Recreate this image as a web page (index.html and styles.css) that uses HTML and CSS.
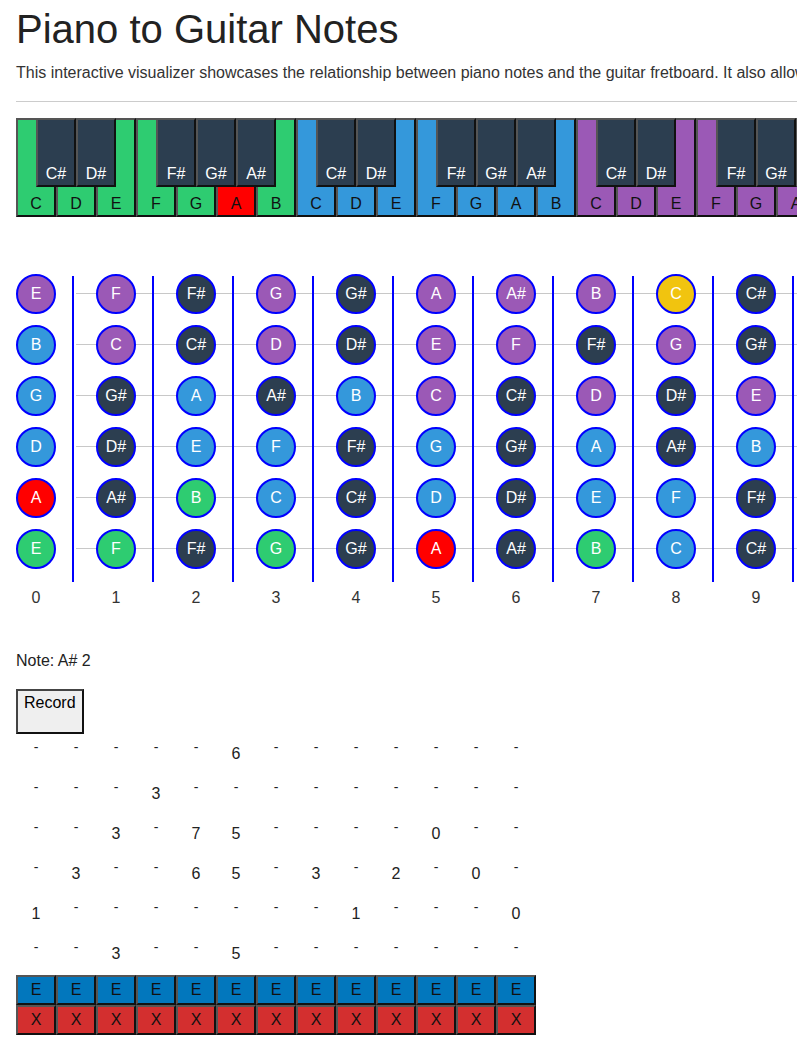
FILE: index.html
```html
<!DOCTYPE html>
<html lang="en">
<head>
<meta charset="utf-8">
<title>Piano to Guitar Notes</title>
<link rel="stylesheet" href="styles.css">
</head>
<body>
<div class="page">
  <h1 class="title">Piano to Guitar Notes</h1>
  <p class="intro">This interactive visualizer showcases the relationship between piano notes and the guitar fretboard. It also allows you to record the notes you play and see them written out as guitar tablature.</p>
  <hr class="rule">

  <div class="piano">
    <div class="octave oct-green">
      <div class="white k-c">C</div><div class="white k-d">D</div><div class="white k-e">E</div>
      <div class="white k-f">F</div><div class="white k-g">G</div><div class="white k-a active">A</div><div class="white k-b">B</div>
      <div class="black k-cs">C#</div><div class="black k-ds">D#</div>
      <div class="black k-fs">F#</div><div class="black k-gs">G#</div><div class="black k-as">A#</div>
    </div>
    <div class="octave oct-blue">
      <div class="white k-c">C</div><div class="white k-d">D</div><div class="white k-e">E</div>
      <div class="white k-f">F</div><div class="white k-g">G</div><div class="white k-a">A</div><div class="white k-b">B</div>
      <div class="black k-cs">C#</div><div class="black k-ds">D#</div>
      <div class="black k-fs">F#</div><div class="black k-gs">G#</div><div class="black k-as">A#</div>
    </div>
    <div class="octave oct-purple">
      <div class="white k-c">C</div><div class="white k-d">D</div><div class="white k-e">E</div>
      <div class="white k-f">F</div><div class="white k-g">G</div><div class="white k-a">A</div><div class="white k-b">B</div>
      <div class="black k-cs">C#</div><div class="black k-ds">D#</div>
      <div class="black k-fs">F#</div><div class="black k-gs">G#</div><div class="black k-as">A#</div>
    </div>
  </div>

  <div class="fretboard">
    <div class="dot purple">E</div><div class="dot purple">F</div><div class="dot dark">F#</div><div class="dot purple">G</div><div class="dot dark">G#</div><div class="dot purple">A</div><div class="dot purple">A#</div><div class="dot purple">B</div><div class="dot yellow">C</div><div class="dot dark">C#</div>

    <div class="dot blue">B</div><div class="dot purple">C</div><div class="dot dark">C#</div><div class="dot purple">D</div><div class="dot dark">D#</div><div class="dot purple">E</div><div class="dot purple">F</div><div class="dot dark">F#</div><div class="dot purple">G</div><div class="dot dark">G#</div>

    <div class="dot blue">G</div><div class="dot dark">G#</div><div class="dot blue">A</div><div class="dot dark">A#</div><div class="dot blue">B</div><div class="dot purple">C</div><div class="dot dark">C#</div><div class="dot purple">D</div><div class="dot dark">D#</div><div class="dot purple">E</div>

    <div class="dot blue">D</div><div class="dot dark">D#</div><div class="dot blue">E</div><div class="dot blue">F</div><div class="dot dark">F#</div><div class="dot blue">G</div><div class="dot dark">G#</div><div class="dot blue">A</div><div class="dot dark">A#</div><div class="dot blue">B</div>

    <div class="dot red">A</div><div class="dot dark">A#</div><div class="dot green">B</div><div class="dot blue">C</div><div class="dot dark">C#</div><div class="dot blue">D</div><div class="dot dark">D#</div><div class="dot blue">E</div><div class="dot blue">F</div><div class="dot dark">F#</div>

    <div class="dot green">E</div><div class="dot green">F</div><div class="dot dark">F#</div><div class="dot green">G</div><div class="dot dark">G#</div><div class="dot red">A</div><div class="dot dark">A#</div><div class="dot green">B</div><div class="dot blue">C</div><div class="dot dark">C#</div>

    <div class="fret-num">0</div><div class="fret-num">1</div><div class="fret-num">2</div><div class="fret-num">3</div><div class="fret-num">4</div><div class="fret-num">5</div><div class="fret-num">6</div><div class="fret-num">7</div><div class="fret-num">8</div><div class="fret-num">9</div>
  </div>

  <p class="note">Note: A# 2</p>
  <button class="record" type="button">Record</button>

  <div class="tab">
    <div class="cell dash">-</div><div class="cell dash">-</div><div class="cell dash">-</div><div class="cell dash">-</div><div class="cell dash">-</div><div class="cell">6</div><div class="cell dash">-</div><div class="cell dash">-</div><div class="cell dash">-</div><div class="cell dash">-</div><div class="cell dash">-</div><div class="cell dash">-</div><div class="cell dash">-</div>

    <div class="cell dash">-</div><div class="cell dash">-</div><div class="cell dash">-</div><div class="cell">3</div><div class="cell dash">-</div><div class="cell dash">-</div><div class="cell dash">-</div><div class="cell dash">-</div><div class="cell dash">-</div><div class="cell dash">-</div><div class="cell dash">-</div><div class="cell dash">-</div><div class="cell dash">-</div>

    <div class="cell dash">-</div><div class="cell dash">-</div><div class="cell">3</div><div class="cell dash">-</div><div class="cell">7</div><div class="cell">5</div><div class="cell dash">-</div><div class="cell dash">-</div><div class="cell dash">-</div><div class="cell dash">-</div><div class="cell">0</div><div class="cell dash">-</div><div class="cell dash">-</div>

    <div class="cell dash">-</div><div class="cell">3</div><div class="cell dash">-</div><div class="cell dash">-</div><div class="cell">6</div><div class="cell">5</div><div class="cell dash">-</div><div class="cell">3</div><div class="cell dash">-</div><div class="cell">2</div><div class="cell dash">-</div><div class="cell">0</div><div class="cell dash">-</div>

    <div class="cell">1</div><div class="cell dash">-</div><div class="cell dash">-</div><div class="cell dash">-</div><div class="cell dash">-</div><div class="cell dash">-</div><div class="cell dash">-</div><div class="cell dash">-</div><div class="cell">1</div><div class="cell dash">-</div><div class="cell dash">-</div><div class="cell dash">-</div><div class="cell">0</div>

    <div class="cell dash">-</div><div class="cell dash">-</div><div class="cell">3</div><div class="cell dash">-</div><div class="cell dash">-</div><div class="cell">5</div><div class="cell dash">-</div><div class="cell dash">-</div><div class="cell dash">-</div><div class="cell dash">-</div><div class="cell dash">-</div><div class="cell dash">-</div><div class="cell dash">-</div>
  </div>

  <div class="keyrow keyrow-e">
    <div class="kbtn">E</div><div class="kbtn">E</div><div class="kbtn">E</div><div class="kbtn">E</div><div class="kbtn">E</div><div class="kbtn">E</div><div class="kbtn">E</div><div class="kbtn">E</div><div class="kbtn">E</div><div class="kbtn">E</div><div class="kbtn">E</div><div class="kbtn">E</div><div class="kbtn">E</div>
  </div>
  <div class="keyrow keyrow-x">
    <div class="kbtn">X</div><div class="kbtn">X</div><div class="kbtn">X</div><div class="kbtn">X</div><div class="kbtn">X</div><div class="kbtn">X</div><div class="kbtn">X</div><div class="kbtn">X</div><div class="kbtn">X</div><div class="kbtn">X</div><div class="kbtn">X</div><div class="kbtn">X</div><div class="kbtn">X</div>
  </div>
</div>
</body>
</html>
```

FILE: styles.css
```css
html, body {
  margin: 0;
  padding: 0;
  background: #ffffff;
  overflow-x: hidden;
}

.page {
  width: 1100px;
  padding: 6px 16px 0;
  font-family: "Liberation Sans", Arial, sans-serif;
  font-size: 16px;
  color: #222;
}

.title {
  margin: 0;
  font-size: 40px;
  line-height: 46px;
  font-weight: normal;
  color: #222;
}

.intro {
  margin: 12px 0 0;
  white-space: nowrap;
  color: #333;
}

.rule {
  height: 0;
  margin: 19px 0 16px;
  border: 0;
  border-top: 1px solid #cccccc;
}

/* ---------- piano ---------- */
.piano {
  display: flex;
}

.octave {
  display: grid;
  grid-template-columns: repeat(14, 20px);
  grid-template-rows: 69px 30px;
}

.oct-green .white { background: #2ecc71; }
.oct-blue .white { background: #3498db; }
.oct-purple .white { background: #9b59b6; }
.octave .white.active { background: #ff0000; }

.white,
.black {
  box-sizing: border-box;
  border: 2px solid;
  border-color: #555555 #111111 #111111 #555555;
  display: flex;
  align-items: flex-end;
  justify-content: center;
}

.white {
  grid-row: 1 / 3;
  padding-bottom: 2px;
  color: #111;
}

.black {
  grid-row: 1;
  z-index: 1;
  background: #2c3e50;
  color: #ffffff;
  padding-bottom: 2px;
}

.k-c { grid-column: 1 / 3; }
.k-d { grid-column: 3 / 5; }
.k-e { grid-column: 5 / 7; }
.k-f { grid-column: 7 / 9; }
.k-g { grid-column: 9 / 11; }
.k-a { grid-column: 11 / 13; }
.k-b { grid-column: 13 / 15; }
.k-cs { grid-column: 2 / 4; }
.k-ds { grid-column: 4 / 6; }
.k-fs { grid-column: 8 / 10; }
.k-gs { grid-column: 10 / 12; }
.k-as { grid-column: 12 / 14; }

/* ---------- fretboard ---------- */
.fretboard {
  margin-top: 57px;
  display: grid;
  grid-template-columns: repeat(10, 80px);
  grid-template-rows: repeat(6, 40px) 36px;
  row-gap: 11px;
  justify-items: start;
  background-image:
    linear-gradient(to right, transparent 56px, #0000ff 56px, #0000ff 58px, transparent 58px),
    repeating-linear-gradient(to bottom, transparent 0, transparent 19px, #c8c8c8 19px, #c8c8c8 20px, transparent 20px, transparent 51px);
  background-size: 80px 306px, calc(100% - 60px) 306px;
  background-position: 0 2px, 60px 0;
  background-repeat: repeat-x, no-repeat;
}

.dot {
  box-sizing: border-box;
  width: 40px;
  height: 40px;
  border: 2px solid #0000ff;
  border-radius: 50%;
  display: flex;
  align-items: center;
  justify-content: center;
  color: #ffffff;
}

.dot.purple { background: #9b59b6; }
.dot.blue { background: #3498db; }
.dot.green { background: #2ecc71; }
.dot.dark { background: #2c3e50; }
.dot.red { background: #ff0000; }
.dot.yellow { background: #f1c40f; }

.fret-num {
  width: 40px;
  display: flex;
  align-items: center;
  justify-content: center;
  color: #333;
}

/* ---------- note + record ---------- */
.note {
  margin: 36px 0 0;
  color: #222;
}

.record {
  display: block;
  margin-top: 19px;
  padding: 3px 6px 20px;
  font-family: "Liberation Sans", Arial, sans-serif;
  font-size: 16px;
  color: #000;
  background: #efefef;
  border: 2px solid;
  border-color: #444444 #111111 #111111 #444444;
  border-radius: 0;
}

/* ---------- tab ---------- */
.tab {
  display: grid;
  grid-template-columns: repeat(13, 40px);
  grid-auto-rows: 40px;
  color: #222;
}

.cell {
  display: flex;
  align-items: center;
  justify-content: center;
}

.cell.dash {
  padding-bottom: 14px;
  box-sizing: border-box;
  font-size: 14px;
}

/* ---------- string buttons ---------- */
.keyrow {
  display: grid;
  grid-template-columns: repeat(13, 40px);
  grid-auto-rows: 30px;
}

.keyrow-e {
  margin-top: 1px;
}

.kbtn {
  box-sizing: border-box;
  border: 2px solid;
  border-color: #555555 #111111 #111111 #555555;
  display: flex;
  align-items: center;
  justify-content: center;
  color: #111;
}

.keyrow-e .kbtn { background: #0277bd; }
.keyrow-x .kbtn { background: #d32f2f; }
```
